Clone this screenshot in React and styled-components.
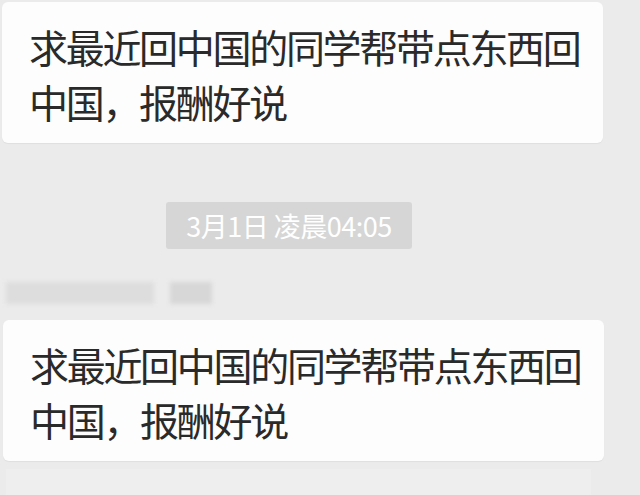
import React from "react";
import styled, { createGlobalStyle } from "styled-components";

const GlobalStyle = createGlobalStyle`
  html, body {
    margin: 0;
    padding: 0;
    background: #ebebeb;
    overflow: hidden;
  }
  body {
    font-family: "Noto Sans CJK SC", "Noto Sans", sans-serif;
  }
`;

const Page = styled.div`
  width: 640px;
  height: 495px;
  display: flex;
  flex-direction: column;
  background: #ebebeb;
  overflow: hidden;
`;

const Bubble = styled.div`
  width: 574px;
  margin: ${(p) => p.$top}px 0 0 ${(p) => p.$left}px;
  padding: 17px 0 14px 27px;
  background: #fdfdfd;
  border-radius: 6px;
  box-shadow: 0 1px 1px rgba(0, 0, 0, 0.05);
  color: #2a2a2a;
  font-size: 39px;
  letter-spacing: -2.3px;
  line-height: 55px;
`;

const Line = styled.div`
  white-space: nowrap;
`;

const TimeRow = styled.div`
  display: flex;
  padding-left: 166px;
  margin-top: 59px;
`;

const TimeStamp = styled.div`
  width: 246px;
  height: 47px;
  display: flex;
  align-items: center;
  justify-content: center;
  background: #d6d6d6;
  border-radius: 3px;
  color: #fff;
  font-family: "Noto Sans CJK SC", "Roboto", sans-serif;
  font-size: 27px;
  letter-spacing: -0.5px;
`;

const NameRow = styled.div`
  display: flex;
  gap: 16px;
  padding-left: 6px;
  margin-top: 33px;
  height: 22px;
  filter: blur(2px);
`;

const NameBlock = styled.div`
  width: ${(p) => p.$w}px;
  height: 22px;
  background: ${(p) => p.$c};
`;

const Footer = styled.div`
  margin: 8px 0 0 6px;
  width: 585px;
  height: 30px;
  background: #eeeeee;
`;

const Message = ({ top, left }) => (
  <Bubble $top={top} $left={left}>
    <Line>求最近回中国的同学帮带点东西回</Line>
    <Line>中国，报酬好说</Line>
  </Bubble>
);

const App = () => (
  <Page>
    <GlobalStyle />
    <Message top={2} left={2} />
    <TimeRow>
      <TimeStamp>3月1日 凌晨04:05</TimeStamp>
    </TimeRow>
    <NameRow>
      <NameBlock $w={148} $c="#dddddd" />
      <NameBlock $w={42} $c="#d7d7d7" />
    </NameRow>
    <Message top={16} left={3} />
    <Footer />
  </Page>
);

export default App;
